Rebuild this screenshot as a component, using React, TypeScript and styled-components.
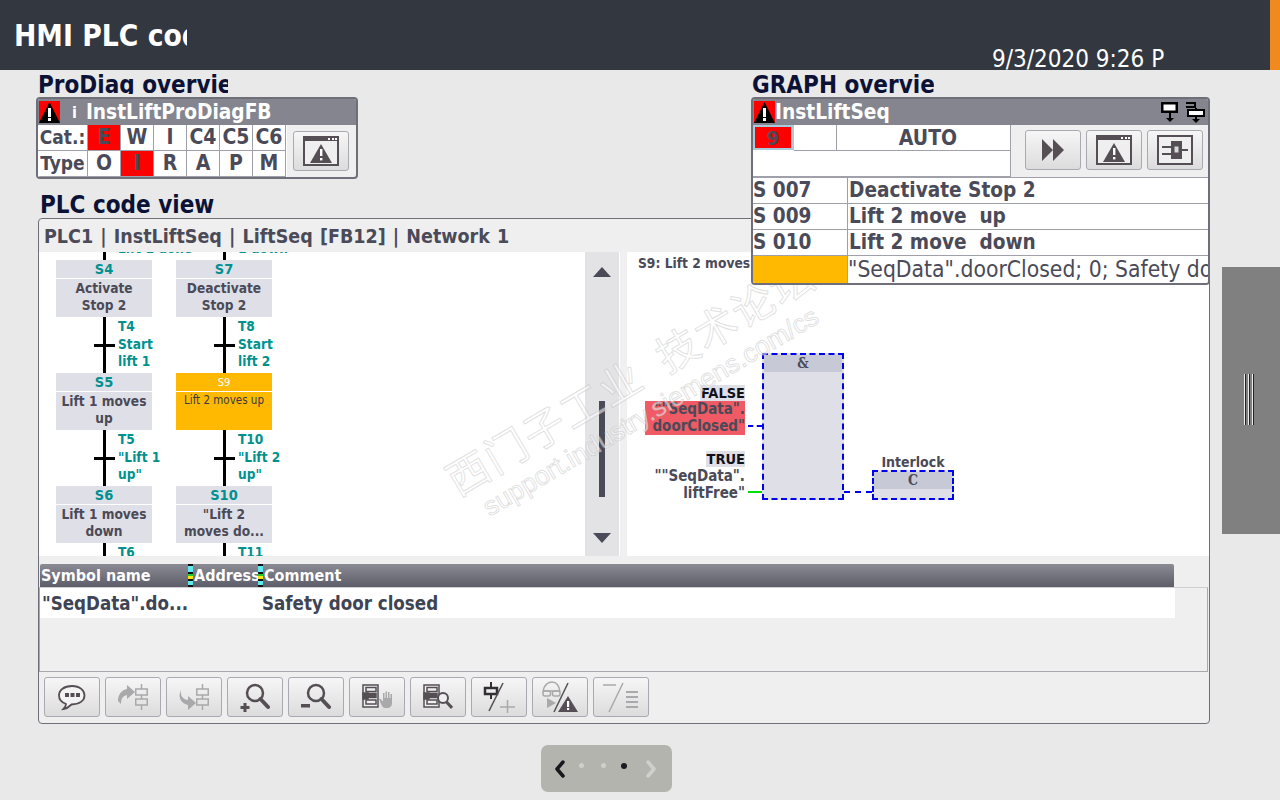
import React from "react";
import styled, { createGlobalStyle } from "styled-components";

const FONT = `"DejaVu Sans Condensed", "DejaVu Sans", sans-serif`;
const INK = "#4a4a58";
const GRID = "#a0a0aa";

const Global = createGlobalStyle`
  html, body { margin: 0; padding: 0; background: #e9e9e9; }
  body { width: 1280px; height: 800px; overflow: hidden; font-family: ${FONT}; font-stretch: condensed; color: ${INK}; }
  #root { width: 1280px; height: 800px; }
`;

const Page = styled.div`
  position: relative;
  width: 1280px;
  height: 800px;
  overflow: hidden;
  display: flex;
  flex-direction: column;
`;
const Header = styled.header`
  height: 70px;
  flex: none;
  background: #333740;
  display: flex;
  justify-content: space-between;
  box-sizing: border-box;
  padding-left: 14px;
`;
const AppTitle = styled.h1`
  margin: 19px 0 0;
  width: 173px;
  height: 34px;
  overflow: hidden;
  white-space: nowrap;
  font-size: 29.7px;
  line-height: 34px;
  font-weight: 700;
  color: #fff;
`;
const HeaderRight = styled.div`
  display: flex;
  align-items: flex-end;
  gap: 106px;
`;
const Clock = styled.div`
  font-size: 24px;
  line-height: 28px;
  color: #fff;
  margin-bottom: -3px;
  width: 172px;
  overflow: hidden;
  white-space: nowrap;
  position: relative;
  z-index: 1;
`;
const Accent = styled.div`
  width: 10px;
  height: 70px;
  background: #f18a1e;
`;
const Main = styled.main`
  flex: 1;
  display: flex;
  flex-direction: column;
  align-items: flex-start;
  padding-left: 36px;
`;
const SectionTitle = styled.h2<{ $w: number; $ml: number; $mt: number; $lh: number }>`
  margin: ${(p) => p.$mt}px 0 0 ${(p) => p.$ml}px;
  width: ${(p) => p.$w}px;
  height: 24px;
  line-height: ${(p) => p.$lh}px;
  overflow: hidden;
  white-space: nowrap;
  font-size: 24px;
  font-weight: 700;
  color: #0b1236;
`;
const Win = styled.section<{ $w: number }>`
  width: ${(p) => p.$w}px;
  box-sizing: border-box;
  border: 2px solid #6f6f7a;
  border-radius: 4px;
  background: #efefef;
  overflow: hidden;
`;
const ProDiagWin = styled(Win)`
  margin-top: 3px;
`;
const WinBar = styled.div`
  height: 26px;
  background: #85858f;
  display: flex;
  align-items: center;
  color: #fff;
  font-size: 20.7px;
  font-weight: 700;
  padding-left: 1px;
`;
const BarInfo = styled.span`
  margin: 0 9px 0 12px;
  font-size: 16px;
`;
const BarRight = styled.div`
  margin-left: auto;
  display: flex;
  gap: 5px;
  padding-right: 3px;
  align-items: center;
`;
const ProDiagBody = styled.div`
  display: flex;
  align-items: center;
  gap: 6px;
`;
const CatGrid = styled.div`
  display: grid;
  grid-template-columns: 50px repeat(6, 33px);
  grid-auto-rows: 26px;
  width: 249px;
  background: #fff;
`;
const Cat = styled.div<{ $on?: boolean; $label?: boolean }>`
  box-sizing: border-box;
  border-right: 1px solid ${GRID};
  border-bottom: 1px solid ${GRID};
  background: ${(p) => (p.$on ? "#fd0000" : "#fff")};
  font-size: ${(p) => (p.$label ? 19 : 21)}px;
  font-weight: 700;
  line-height: 25px;
  text-align: center;
  overflow: hidden;
  white-space: nowrap;
`;
const ToolBtn = styled.button<{ $w?: number; $h?: number }>`
  width: ${(p) => p.$w ?? 56}px;
  height: ${(p) => p.$h ?? 40}px;
  padding: 0;
  flex: none;
  display: flex;
  align-items: center;
  justify-content: center;
  background: linear-gradient(#f6f6f6, #dcdcdc);
  border: 1px solid #a9a9b2;
  border-radius: 3px;
`;
const CodeView = styled.section`
  margin: 1px 0 0 2px;
  width: 1172px;
  height: 506px;
  box-sizing: border-box;
  border: 1px solid #6f6f7a;
  border-radius: 4px;
  background: #efefef;
  overflow: hidden;
`;
const Breadcrumb = styled.div`
  height: 33px;
  line-height: 36px;
  padding-left: 5px;
  font-size: 19.5px;
  word-spacing: 1px;
  font-weight: 700;
  white-space: pre;
`;
const Panels = styled.div`
  display: flex;
  height: 304px;
`;
const ChartPane = styled.div`
  width: 546px;
  background: #fff;
  overflow: hidden;
  display: flex;
  gap: 24px;
  padding-left: 17px;
  box-sizing: border-box;
`;
const ChartCol = styled.div`
  width: 96px;
  margin-top: -48px;
  flex: none;
  display: flex;
  flex-direction: column;
  align-items: stretch;
`;
const Step = styled.div`
  flex: none;
  display: flex;
  flex-direction: column;
  gap: 1px;
  height: 57px;
  text-align: center;
  font-weight: 700;
`;
const StepNo = styled.div<{ $active?: boolean }>`
  height: 18px;
  line-height: 19px;
  font-size: ${(p) => (p.$active ? 11 : 14.5)}px;
  font-weight: ${(p) => (p.$active ? 400 : 700)};
  color: ${(p) => (p.$active ? "#fff" : "#00918f")};
  background: ${(p) => (p.$active ? "#ffb900" : "#dfdfe7")};
`;
const StepText = styled.div<{ $active?: boolean }>`
  height: 38px;
  line-height: 17px;
  font-size: ${(p) => (p.$active ? 11.5 : 13.6)}px;
  font-weight: ${(p) => (p.$active ? 400 : 700)};
  color: ${(p) => (p.$active ? "#3a3a44" : INK)};
  background: ${(p) => (p.$active ? "#ffb900" : "#dfdfe7")};
  padding-top: ${(p) => (p.$active ? 0 : 1)}px;
  box-sizing: border-box;
  white-space: pre;
`;
const Trans = styled.div`
  flex: none;
  position: relative;
  height: 56px;
  &::before {
    content: "";
    position: absolute;
    left: 47px;
    top: 0;
    bottom: 0;
    width: 3px;
    background: #000;
  }
  &::after {
    content: "";
    position: absolute;
    left: 38px;
    top: 27px;
    width: 21px;
    height: 3px;
    background: #000;
  }
`;
const TransLabel = styled.div`
  position: absolute;
  left: 62px;
  top: 1px;
  width: 60px;
  font-size: 13.6px;
  line-height: 17.5px;
  font-weight: 700;
  color: #00918f;
  white-space: pre;
`;
const Scroll = styled.div`
  width: 34px;
  flex: none;
  background: #e3e3e6;
  display: flex;
  flex-direction: column;
  align-items: center;
  position: relative;
`;
const ScrollThumb = styled.div`
  position: absolute;
  top: 149px;
  left: 14px;
  width: 6px;
  height: 96px;
  background: #4a4a58;
`;
const ArrowUp = styled.div`
  position: absolute;
  top: 15px;
  left: 8px;
  border-left: 9px solid transparent;
  border-right: 9px solid transparent;
  border-bottom: 10px solid #4a4a58;
`;
const ArrowDown = styled.div`
  position: absolute;
  bottom: 13px;
  left: 8px;
  border-left: 9px solid transparent;
  border-right: 9px solid transparent;
  border-top: 10px solid #4a4a58;
`;
const Gutter = styled.div`
  width: 8px;
  flex: none;
  background: #f0f0f0;
  border-left: 1px solid #fff;
  box-sizing: border-box;
`;
const FbdPane = styled.div`
  flex: 1;
  position: relative;
  background: #fff;
  overflow: hidden;
`;
const NetTitle = styled.div`
  position: absolute;
  left: 11px;
  top: 2px;
  font-size: 13.7px;
  line-height: 18px;
  font-weight: 700;
  white-space: nowrap;
`;
const Fb = styled.div<{ $x: number; $y: number; $w: number; $h: number }>`
  position: absolute;
  left: ${(p) => p.$x}px;
  top: ${(p) => p.$y}px;
  width: ${(p) => p.$w}px;
  height: ${(p) => p.$h}px;
  box-sizing: border-box;
  border: 2px dashed #0000f0;
  background: #dfdfe7;
`;
const FbHead = styled.div`
  height: 17px;
  line-height: 17px;
  background: #c8c9d6;
  text-align: center;
  font-size: 14px;
  font-weight: 700;
  font-family: "DejaVu Serif Condensed", "DejaVu Serif", serif;
`;
const Operand = styled.div<{ $y: number; $fault?: boolean }>`
  position: absolute;
  right: 464px;
  top: ${(p) => p.$y}px;
  width: 100px;
  text-align: right;
  font-size: 15px;
  line-height: 17px;
  font-weight: 700;
  white-space: nowrap;
  background: ${(p) => (p.$fault ? "#ef5a64" : "transparent")};
`;
const OperandState = styled.span<{ $y: number }>`
  position: absolute;
  right: 464px;
  top: ${(p) => p.$y}px;
  background: #dfdfe7;
  font-size: 14.5px;
  line-height: 16px;
  font-weight: 700;
  color: #101018;
  padding-left: 1px;
`;
const Wire = styled.div<{ $x: number; $y: number; $w: number; $c: string; $dashed?: boolean }>`
  position: absolute;
  left: ${(p) => p.$x}px;
  top: ${(p) => p.$y}px;
  width: ${(p) => p.$w}px;
  height: 0;
  border-top: 2px ${(p) => (p.$dashed ? "dashed" : "solid")} ${(p) => p.$c};
`;
const FbName = styled.div`
  position: absolute;
  left: 245px;
  top: 202px;
  width: 82px;
  text-align: center;
  font-size: 14px;
  line-height: 16px;
  font-weight: 700;
`;
const Gap = styled.div`
  height: 8px;
`;
const THead = styled.div`
  margin-left: 1px;
  width: 1134px;
  height: 23px;
  display: flex;
  background: linear-gradient(#8b8b95, #5d5d69);
  color: #fff;
  font-size: 16px;
  line-height: 23px;
  font-weight: 700;
  border-radius: 2px 2px 0 0;
`;
const TH = styled.div<{ $w: number }>`
  width: ${(p) => p.$w}px;
  padding-left: 1px;
  box-sizing: border-box;
  white-space: nowrap;
  overflow: hidden;
  flex: none;
`;
const Grip = styled.div`
  width: 5px;
  flex: none;
  background: linear-gradient(
    #111 0 8%, #5fe9f0 8% 36%, #111 36% 42%, #26c926 42% 52%, #f4e80b 52% 66%, #111 66% 72%, #5fe9f0 72% 92%, #111 92%
  );
`;
const TBox = styled.div`
  height: 85px;
  box-sizing: border-box;
  border: 1px solid #a8a8ae;
  border-top-color: #d0d0d4;
  margin-right: 1px;
`;
const TRow = styled.div`
  width: 1135px;
  height: 30px;
  background: #fff;
  display: flex;
  align-items: center;
  font-size: 18.6px;
  font-weight: 700;
  color: #3f4454;
`;
const TD = styled.div<{ $w: number }>`
  width: ${(p) => p.$w}px;
  padding-left: 2px;
  box-sizing: border-box;
  white-space: nowrap;
  flex: none;
`;
const Toolbar = styled.div`
  display: flex;
  gap: 5px;
  padding: 5px 0 0 5px;
`;
const GraphWin = styled(Win)`
  position: absolute;
  left: 751px;
  top: 97px;
  height: 188px;
  z-index: 3;
`;
const GraphTitle = styled.h2`
  position: absolute;
  left: 752px;
  top: 72px;
  margin: 0;
  width: 182px;
  height: 24px;
  line-height: 27px;
  overflow: hidden;
  white-space: nowrap;
  font-size: 24px;
  font-weight: 700;
  color: #0b1236;
  z-index: 3;
`;
const GraphTop = styled.div`
  display: flex;
  height: 52px;
`;
const GraphState = styled.div`
  width: 257px;
  display: grid;
  grid-template-columns: 41px 43px 173px;
  grid-template-rows: 26px 26px;
  background: #fff;
  border-right: 1px solid ${GRID};
  border-bottom: 1px solid ${GRID};
  box-sizing: content-box;
`;
const StateCell = styled.div`
  box-sizing: border-box;
  border-right: 1px solid ${GRID};
  border-bottom: 1px solid ${GRID};
  font-size: 21px;
  font-weight: 700;
  line-height: 26px;
  text-align: center;
`;
const StateAuto = styled(StateCell)`
  border-right: 0;
  padding-left: 9px;
`;
const StateBlank = styled(StateCell)`
  grid-column: 1 / 4;
  border: 0;
`;
const FaultNo = styled.div`
  width: 41px;
  box-sizing: border-box;
  border: 2px solid #a8cbdc;
  border-right-width: 3px;
  background: #fd0000;
  height: 25px;
  font-size: 20px;
  line-height: 22px;
  font-weight: 700;
  text-align: center;
`;
const GraphBtns = styled.div`
  flex: 1;
  display: flex;
  gap: 5px;
  align-items: center;
  padding: 0 0 2px 14px;
`;
const StepRow = styled.div<{ $h?: number }>`
  display: grid;
  grid-template-columns: 95px 1fr;
  height: ${(p) => p.$h ?? 26}px;
  background: #fff;
  border-top: 1px solid ${GRID};
  box-sizing: border-box;
`;
const StepId = styled.div<{ $amber?: boolean }>`
  border-right: 1px solid ${GRID};
  font-size: 20.6px;
  line-height: 25px;
  font-weight: 700;
  white-space: nowrap;
  background: ${(p) => (p.$amber ? "#ffb900" : "transparent")};
`;
const StepName = styled.div`
  font-size: 20.6px;
  line-height: 25px;
  font-weight: 700;
  white-space: pre;
  padding-left: 1px;
`;
const StepCond = styled.div`
  font-size: 22.7px;
  line-height: 26px;
  white-space: pre;
  overflow: hidden;
`;
const Handle = styled.div`
  position: absolute;
  left: 1222px;
  top: 267px;
  width: 58px;
  height: 267px;
  background: #808080;
  display: flex;
  align-items: center;
  justify-content: center;
  padding-right: 4px;
  box-sizing: border-box;
  z-index: 4;
`;
const GripLines = styled.div`
  width: 10px;
  height: 51px;
  margin-top: -3px;
  background: repeating-linear-gradient(90deg, #eee 0 1px, #222 1px 2px, #808080 2px 4px);
`;
const Pager = styled.nav`
  position: absolute;
  left: 541px;
  top: 745px;
  width: 131px;
  height: 47px;
  background: #b3b4ae;
  border-radius: 7px;
  display: flex;
  align-items: center;
  justify-content: space-between;
  box-sizing: border-box;
  padding: 0 14px 0 12px;
`;
const Dot = styled.span<{ $x: number; $on?: boolean }>`
  position: absolute;
  top: 18px;
  left: ${(p) => p.$x}px;
  width: ${(p) => (p.$on ? 6 : 5)}px;
  height: ${(p) => (p.$on ? 6 : 5)}px;
  border-radius: 50%;
  background: ${(p) => (p.$on ? "#1a1a20" : "#cfd0cb")};
`;
const Watermark = styled.div`
  position: absolute;
  left: 428px;
  top: 348px;
  width: 420px;
  transform: rotate(-30.5deg);
  transform-origin: center;
  z-index: 2;
  pointer-events: none;
  color: rgba(255, 255, 255, 0.55);
  -webkit-text-stroke: 1px rgba(170, 170, 170, 0.36);
  text-align: center;
  white-space: nowrap;
`;
const WmCn = styled.div`
  font-family: "Noto Sans CJK SC", sans-serif;
  font-size: 42px;
  line-height: 50px;
  letter-spacing: 2px;
  white-space: pre;
`;
const WmEn = styled.div`
  font-family: "Liberation Sans", sans-serif;
  font-size: 26.5px;
  line-height: 34px;
`;

const D = "#554f55";
const G = "#a9a9ab";

const Alert = () => (
  <svg width="21" height="22" viewBox="0 0 21 22">
    <rect width="21" height="22" fill="#fd0000" />
    <path d="M10.5 1 L21 22 H0 Z" fill="#000" />
    <rect x="9" y="7" width="3" height="9" fill="#fff" />
    <rect x="9" y="17" width="3" height="3" fill="#fff" />
  </svg>
);
const WinAlert = () => (
  <svg width="36" height="30" viewBox="0 0 36 30">
    <path d="M1 1h34v28H1z" fill="#efefef" stroke={D} strokeWidth="2" />
    <rect x="0" y="0" width="36" height="5" fill={D} />
    <path d="M25 2h2v2h-2zM29 2h2v2h-2zM32 2h2v2h-2z" fill="#fff" />
    <path d="M18 8 L29 27 H7 Z" fill={D} />
    <rect x="17" y="13" width="2.4" height="7" fill="#fff" />
    <rect x="17" y="22" width="2.4" height="2.4" fill="#fff" />
  </svg>
);
const FastForward = () => (
  <svg width="24" height="24" viewBox="0 0 24 24">
    <path d="M1 1 L12 12 L1 23 Z M12 1 L23 12 L12 23 Z" fill={D} />
  </svg>
);
const FbdIcon = () => (
  <svg width="36" height="30" viewBox="0 0 36 30">
    <rect x="1" y="1" width="34" height="28" fill="#efefef" stroke={D} strokeWidth="2" />
    <rect x="14" y="6" width="11" height="18" fill={D} />
    <rect x="17.5" y="11.5" width="4" height="6" fill="#d8d8d8" />
    <path d="M5 11h9v2H5zM5 18h9v2H5zM25 14h6v2h-6z" fill={D} />
  </svg>
);
const DownPanel = () => (
  <svg width="20" height="22" viewBox="0 0 20 22">
    <rect x="1" y="1" width="17" height="11" fill="#000" />
    <rect x="3.5" y="3.5" width="12" height="6" fill="#fff" />
    <path d="M9 12h2v5h3l-4 4-4-4h3z" fill="#000" />
  </svg>
);
const DownLadder = () => (
  <svg width="20" height="22" viewBox="0 0 20 22">
    <path d="M1 1h10v2H1zM1 5h10v2H1z" fill="#000" />
    <path d="M9 1h2v6H9zM10 7h2v3h-2z" fill="#000" />
    <rect x="3" y="9" width="16" height="6" fill="#fff" stroke="#000" strokeWidth="2" />
    <path d="M10 15h2v3h3l-4 4-4-4h3z" fill="#000" />
  </svg>
);
const Comment = () => (
  <svg width="30" height="30" viewBox="0 0 30 30">
    <path d="M15 4C7 4 2 8 2 13.5c0 4 3 7 7 8.5 0 2-1 3.5-2.5 5 3.500-.5 6-2.500 8-4.500 8 0 13-4 13-9S23 4 15 4z" fill="#f3f3f3" stroke={D} strokeWidth="1.800" />
    <path d="M8 11h4v4H8zM13.500 11h4v4h-4zM19 11h4v4h-4z" fill={D} />
  </svg>
);
const Rung = ({ x = 0, c = G }: { x?: number; c?: string }) => (
  <g fill="none" stroke={c} strokeWidth="1.500" transform={`translate(${x} 0)`}>
    <path d="M6.500 1v5M6.500 12v4M6.500 22v5" />
    <rect x="0.750" y="6" width="11.500" height="6" />
    <rect x="0.750" y="16" width="11.500" height="6" />
  </g>
);
const JumpOut = () => (
  <svg width="32" height="28" viewBox="0 0 32 28">
    <path d="M1 18C1 11 5 7 10 6V2l8 7-8 7v-4c-4 1-6 3-6 9z" fill={G} />
    <Rung x={18} />
  </svg>
);
const JumpIn = () => (
  <svg width="32" height="28" viewBox="0 0 32 28">
    <path d="M3 7c-1 6 2 9 7 10v-4l8 7-8 7v-5C4 21-1 15 3 7z" fill={G} />
    <Rung x={18} />
  </svg>
);
const ZoomIn = ({ minus }: { minus?: boolean }) => (
  <svg width="30" height="30" viewBox="0 0 30 30">
    <circle cx="15" cy="11" r="8" fill="none" stroke={D} strokeWidth="2.500" />
    <path d="M20.500 17 L28 25" stroke={D} strokeWidth="4" strokeLinecap="round" />
    {minus ? (
      <rect x="0" y="22" width="9" height="3.500" fill={D} />
    ) : (
      <path d="M3.500 21h3v3h3v3h-3v3h-3v-3h-3v-3h3z" fill={D} />
    )}
  </svg>
);
const Blocks = () => (
  <g fill="#efefef" stroke={D} strokeWidth="1.500">
    <rect x="1" y="1" width="15" height="22" />
    <rect x="4" y="3.500" width="10" height="4" />
    <rect x="4" y="9.500" width="10" height="4" fill={D} />
    <rect x="1" y="9" width="5" height="6" fill={D} />
    <rect x="4" y="16" width="10" height="4" />
  </g>
);
const NetHand = () => (
  <svg width="30" height="26" viewBox="0 0 30 26">
    <Blocks />
    <path d="M17 15l1-.5 3 3V9h1.500v5h1V7.500H25v6.500h1V8h1.500v6h1v-4H30v9c0 3-2 5-5 5h-2c-2 0-3-2-4-4z" fill={G} />
  </svg>
);
const NetSearch = () => (
  <svg width="30" height="26" viewBox="0 0 30 26">
    <Blocks />
    <circle cx="20" cy="14" r="5" fill="#efefef" stroke={D} strokeWidth="2" />
    <path d="M23.500 18 L29 24" stroke={D} strokeWidth="3" />
  </svg>
);
const Contact = () => (
  <svg width="32" height="32" viewBox="0 0 32 32">
    <path d="M8 1v6M8 13v5" stroke="#332f33" strokeWidth="2" />
    <rect x="2" y="7" width="12" height="6" fill="#efefef" stroke="#332f33" strokeWidth="2.500" />
    <path d="M6 30 L20 2" stroke={D} strokeWidth="1.500" />
    <path d="M17 26h15M24.500 19v14" stroke={G} strokeWidth="1.500" />
  </svg>
);
const GlassesAlert = () => (
  <svg width="36" height="32" viewBox="0 0 36 32">
    <path d="M1 11 C2 3 7 1 10 1 M18 11 C17 3 13 1 10 1 M1 10h17" fill="none" stroke={G} strokeWidth="1.500" />
    <rect x="1" y="10" width="7.500" height="5" rx="2" fill="none" stroke={G} strokeWidth="1.500" />
    <rect x="10.500" y="10" width="7.500" height="5" rx="2" fill="none" stroke={G} strokeWidth="1.500" />
    <path d="M5 17 L14 22 L5 27 Z" fill={G} />
    <path d="M12 31 L26 2" stroke={D} strokeWidth="1.500" />
    <path d="M26 15 L36 31 H16 Z" fill={D} />
    <rect x="25" y="20" width="2.200" height="6" fill="#fff" />
    <rect x="25" y="27" width="2.200" height="2" fill="#fff" />
  </svg>
);
const LinesSlash = () => (
  <svg width="36" height="32" viewBox="0 0 36 32">
    <path d="M0 4h13M6 31 L20 2" stroke={G} strokeWidth="1.500" fill="none" />
    <path d="M23 11h12M23 16h12M23 21h12M23 26h12" stroke={G} strokeWidth="2" fill="none" />
  </svg>
);
const ChevronL = () => (
  <svg width="14" height="20" viewBox="0 0 14 20">
    <path d="M10 3 L4 10 L10 17" fill="none" stroke="#17171c" strokeWidth="3.500" strokeLinecap="round" strokeLinejoin="round" />
  </svg>
);
const ChevronR = () => (
  <svg width="14" height="20" viewBox="0 0 14 20">
    <path d="M4 3 L10 10 L4 17" fill="none" stroke="#cfd0cb" strokeWidth="3.500" strokeLinecap="round" strokeLinejoin="round" />
  </svg>
);

const catRows = [
  { label: "Cat.:", items: ["E", "W", "I", "C4", "C5", "C6"], on: 0 },
  { label: "Type", items: ["O", "I", "R", "A", "P", "M"], on: 1 },
];

const left = [
  { trans: "\n\nLift 1 done" },
  { no: "S4", text: "Activate\nStop 2" },
  { trans: "T4\nStart\nlift 1" },
  { no: "S5", text: "Lift 1 moves\nup" },
  { trans: 'T5\n"Lift 1\nup"' },
  { no: "S6", text: "Lift 1 moves\ndown" },
  { trans: "T6" },
];
const right = [
  { trans: "\n\n1 down" },
  { no: "S7", text: "Deactivate\nStop 2" },
  { trans: "T8\nStart\nlift 2" },
  { no: "S9", text: "Lift 2 moves up", active: true },
  { trans: 'T10\n"Lift 2\nup"' },
  { no: "S10", text: '"Lift 2\nmoves do...' },
  { trans: "T11" },
];

const Chain = ({ items }: { items: any[] }) => (
  <ChartCol>
    {items.map((it, i) =>
      it.trans ? (
        <Trans key={i}>
          <TransLabel>{it.trans}</TransLabel>
        </Trans>
      ) : (
        <Step key={i}>
          <StepNo $active={it.active}>{it.no}</StepNo>
          <StepText $active={it.active}>{it.text}</StepText>
        </Step>
      )
    )}
  </ChartCol>
);

export default function App() {
  return (
    <Page>
      <Global />
      <Header>
        <AppTitle>HMI PLC code view</AppTitle>
        <HeaderRight>
          <Clock>9/3/2020 9:26 PM</Clock>
          <Accent />
        </HeaderRight>
      </Header>
      <Main>
        <SectionTitle $w={190} $ml={2} $mt={0} $lh={31}>
          ProDiag overview
        </SectionTitle>
        <ProDiagWin $w={322}>
          <WinBar>
            <Alert />
            <BarInfo>i</BarInfo>
            InstLiftProDiagFB
          </WinBar>
          <ProDiagBody>
            <CatGrid>
              {catRows.map((r) => (
                <React.Fragment key={r.label}>
                  <Cat $label>{r.label}</Cat>
                  {r.items.map((c, i) => (
                    <Cat key={c} $on={i === r.on}>
                      {c}
                    </Cat>
                  ))}
                </React.Fragment>
              ))}
            </CatGrid>
            <ToolBtn>
              <WinAlert />
            </ToolBtn>
          </ProDiagBody>
        </ProDiagWin>
        <SectionTitle $w={300} $ml={4} $mt={14} $lh={25}>
          PLC code view
        </SectionTitle>
        <CodeView>
          <Breadcrumb>PLC1 | InstLiftSeq | LiftSeq [FB12] | Network 1</Breadcrumb>
          <Panels>
            <ChartPane>
              <Chain items={left} />
              <Chain items={right} />
            </ChartPane>
            <Scroll>
              <ArrowUp />
              <ScrollThumb />
              <ArrowDown />
            </Scroll>
            <Gutter />
            <FbdPane>
              <NetTitle>S9: Lift 2 moves up</NetTitle>
              <OperandState $y={133}>FALSE</OperandState>
              <Operand $y={149} $fault>
                {'""SeqData".'}
                <br />
                {'doorClosed"'}
              </Operand>
              <OperandState $y={199}>TRUE</OperandState>
              <Operand $y={216}>
                {'""SeqData".'}
                <br />
                {'liftFree"'}
              </Operand>
              <Wire $x={121} $y={173} $w={14} $c="#0000f0" $dashed />
              <Wire $x={121} $y={239} $w={15} $c="#00e000" />
              <Fb $x={135} $y={101} $w={82} $h={147}>
                <FbHead>&amp;</FbHead>
              </Fb>
              <Wire $x={217} $y={239} $w={28} $c="#0000f0" $dashed />
              <FbName>Interlock</FbName>
              <Fb $x={245} $y={218} $w={82} $h={30}>
                <FbHead>C</FbHead>
              </Fb>
            </FbdPane>
          </Panels>
          <Gap />
          <THead>
            <TH $w={148}>Symbol name</TH>
            <Grip />
            <TH $w={65}>Address</TH>
            <Grip />
            <TH $w={900}>Comment</TH>
          </THead>
          <TBox>
            <TRow>
              <TD $w={220}>"SeqData".do...</TD>
              <TD $w={500}>Safety door closed</TD>
            </TRow>
          </TBox>
          <Toolbar>
            <ToolBtn><Comment /></ToolBtn>
            <ToolBtn><JumpOut /></ToolBtn>
            <ToolBtn><JumpIn /></ToolBtn>
            <ToolBtn><ZoomIn /></ToolBtn>
            <ToolBtn><ZoomIn minus /></ToolBtn>
            <ToolBtn><NetHand /></ToolBtn>
            <ToolBtn><NetSearch /></ToolBtn>
            <ToolBtn><Contact /></ToolBtn>
            <ToolBtn><GlassesAlert /></ToolBtn>
            <ToolBtn><LinesSlash /></ToolBtn>
          </Toolbar>
        </CodeView>
      </Main>

      <GraphTitle>GRAPH overview</GraphTitle>
      <GraphWin $w={459}>
        <WinBar>
          <Alert />
          InstLiftSeq
          <BarRight>
            <DownPanel />
            <DownLadder />
          </BarRight>
        </WinBar>
        <GraphTop>
          <GraphState>
            <FaultNo>9</FaultNo>
            <StateCell />
            <StateAuto>AUTO</StateAuto>
            <StateBlank />
          </GraphState>
          <GraphBtns>
            <ToolBtn><FastForward /></ToolBtn>
            <ToolBtn><WinAlert /></ToolBtn>
            <ToolBtn><FbdIcon /></ToolBtn>
          </GraphBtns>
        </GraphTop>
        <StepRow>
          <StepId>S 007</StepId>
          <StepName>Deactivate Stop 2</StepName>
        </StepRow>
        <StepRow>
          <StepId>S 009</StepId>
          <StepName>Lift 2 move  up</StepName>
        </StepRow>
        <StepRow>
          <StepId>S 010</StepId>
          <StepName>Lift 2 move  down</StepName>
        </StepRow>
        <StepRow $h={30}>
          <StepId $amber />
          <StepCond>"SeqData".doorClosed; 0; Safety door closed</StepCond>
        </StepRow>
      </GraphWin>

      <Handle>
        <GripLines />
      </Handle>

      <Pager>
        <ChevronL />
        <Dot $x={38} />
        <Dot $x={60} />
        <Dot $x={80} $on />
        <ChevronR />
      </Pager>

      <Watermark>
        <WmCn>西门子工业  技术论坛</WmCn>
        <WmEn>support.industry.siemens.com/cs</WmEn>
      </Watermark>
    </Page>
  );
}
